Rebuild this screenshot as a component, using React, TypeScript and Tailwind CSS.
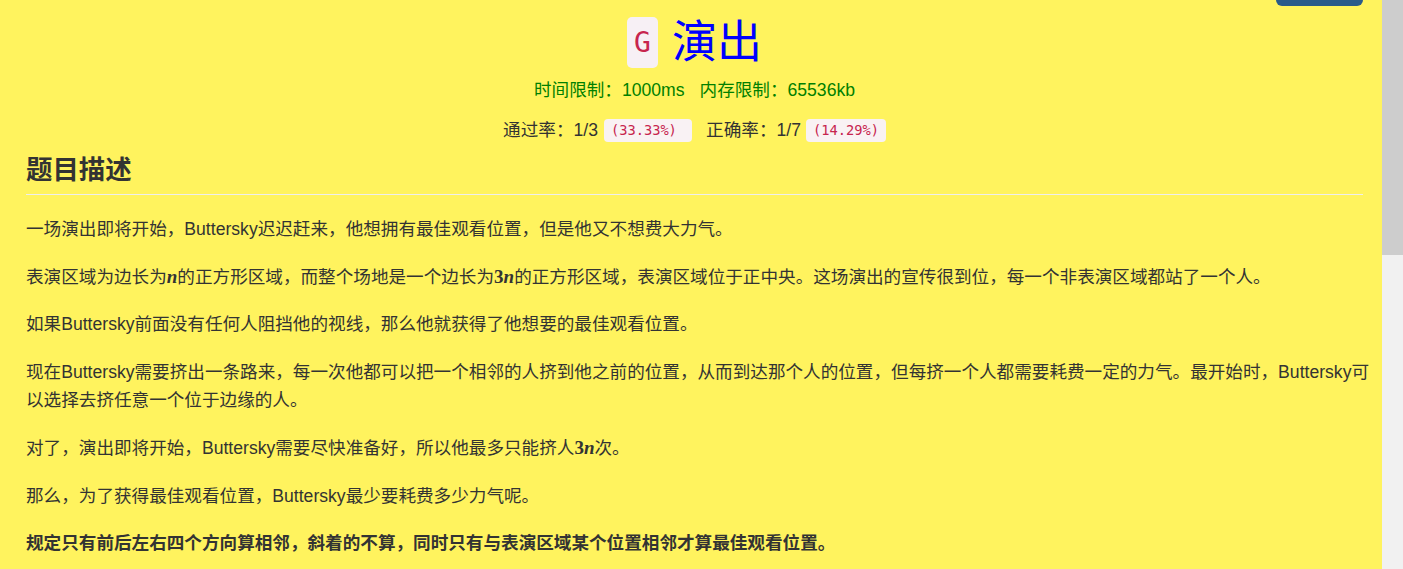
import React from "react";

const sans = "font-['Liberation_Sans','Noto_Sans_CJK_SC',sans-serif]";
const mono = "font-['DejaVu_Sans_Mono',monospace]";

function M({ children }: { children: React.ReactNode }) {
  return <span className="font-['Liberation_Serif',serif] text-[19px] font-bold">{children}</span>;
}

function N() {
  return <span className="font-['Liberation_Serif',serif] italic text-[19px] font-bold">n</span>;
}

function Code({ children }: { children: React.ReactNode }) {
  return (
    <code className={`${mono} inline-flex items-center h-[23px] px-[7px] rounded-[4px] bg-[#f9f2f4] text-[#c7254e] text-[13.7px] whitespace-pre`}>
      {children}
    </code>
  );
}

const paragraphs: React.ReactNode[] = [
  <>一场演出即将开始，Buttersky迟迟赶来，他想拥有最佳观看位置，但是他又不想费大力气。</>,
  <>表演区域为边长为<N />的正方形区域，而整个场地是一个边长为<M>3</M><N />的正方形区域，表演区域位于正中央。这场演出的宣传很到位，每一个非表演区域都站了一个人。</>,
  <>如果Buttersky前面没有任何人阻挡他的视线，那么他就获得了他想要的最佳观看位置。</>,
  <>现在Buttersky需要挤出一条路来，每一次他都可以把一个相邻的人挤到他之前的位置，从而到达那个人的位置，但每挤一个人都需要耗费一定的力气。最开始时，Buttersky可以选择去挤任意一个位于边缘的人。</>,
  <>对了，演出即将开始，Buttersky需要尽快准备好，所以他最多只能挤人<M>3</M><N />次。</>,
  <>那么，为了获得最佳观看位置，Buttersky最少要耗费多少力气呢。</>,
];

export default function App() {
  return (
    <div className={`flex w-full h-[569px] overflow-hidden ${sans}`}>
      <div className="relative flex-1 bg-[#fff35e] pl-[26px] pr-[19px] text-[#333333]">
        {/* clipped button at the top right */}
        <div className="absolute top-[-20px] right-[19px] w-[87px] h-[26px] rounded-[6px] bg-[#2a5b8a]" />

        {/* title */}
        <div className="flex justify-center items-center gap-[14px] pt-[17px]">
          <span className={`${mono} flex items-center justify-center w-[31px] h-[51px] rounded-[5px] bg-[#f7f0f5] text-[#c7254e] text-[28px]`}>
            G
          </span>
          <h1 className="text-[45px] leading-[51px] text-[#0000ff]">演出</h1>
        </div>

        <div className="flex justify-center gap-[15px] mt-[12px] text-[17.6px] leading-[20px] text-[#008000]">
          <span>时间限制：1000ms</span>
          <span>内存限制：65536kb</span>
        </div>

        <div className="flex justify-center items-center mt-[18px] text-[17.6px] leading-[23px]">
          <span>通过率：1/3</span>
          <span className="ml-[6px]"><Code>{"(33.33%) "}</Code></span>
          <span className="ml-[14px]">正确率：1/7</span>
          <span className="ml-[5px]"><Code>(14.29%)</Code></span>
        </div>

        {/* description */}
        <h2 className="mt-[13px] pb-[9px] border-b border-[#eeeeee] text-[26.4px] leading-[30px] font-bold text-[#333333]">
          题目描述
        </h2>

        <div className="mt-[20px] mr-[-10px] text-[17.6px] leading-[28.6px]">
          {paragraphs.map((p, i) => (
            <p key={i} className="mb-[19px]">{p}</p>
          ))}
          <p className="mb-[19px] font-bold">规定只有前后左右四个方向算相邻，斜着的不算，同时只有与表演区域某个位置相邻才算最佳观看位置。</p>
        </div>
      </div>

      {/* scrollbar */}
      <div className="w-[21px] bg-[#f1f1f1]">
        <div className="h-[255px] bg-[#cdcdcd]" />
      </div>
    </div>
  );
}
